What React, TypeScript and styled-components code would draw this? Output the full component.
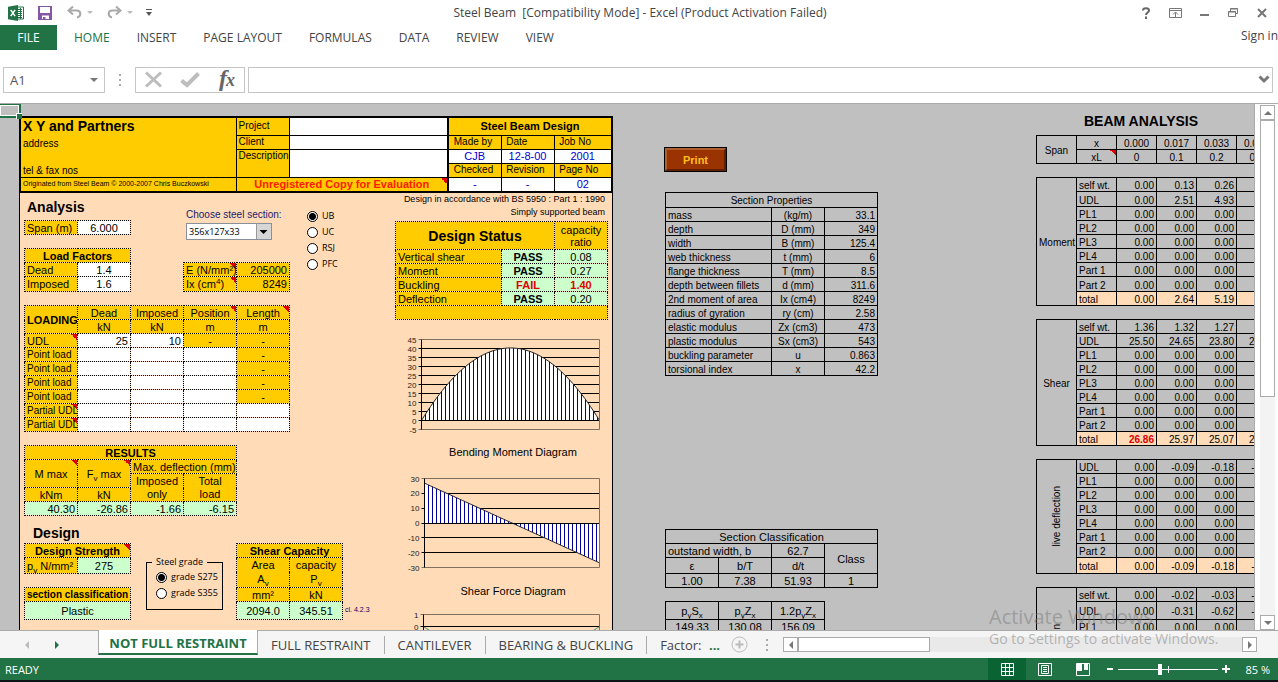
import React from 'react';
import styled, { createGlobalStyle, css } from 'styled-components';

const GREEN = '#217346';
const GOLD = '#ffcc00';
const PEACH = '#ffdbb8';
const MINT = '#ccffcc';
const GREY = '#c0c0c0';
const SHEET_FONT = '"Liberation Sans", Arial, sans-serif';
const UI_FONT = '"Open Sans", "Noto Sans", sans-serif';

const GlobalStyle = createGlobalStyle`
  *, *::before, *::after { box-sizing: border-box; }
  body { margin: 0; background: #fff; font-family: ${UI_FONT}; overflow: hidden; }
  button, input, select { font: inherit; color: inherit; margin: 0; padding: 0; border: 0; background: none; border-radius: 0; }
  h1, h2, h3, p, figure { margin: 0; }
`;

/* ---------- window frame ---------- */

const Shell = styled.div`
  position: relative;
  display: flex;
  flex-direction: column;
  height: 100vh;
  overflow: hidden;
`;

const TitleBar = styled.header`
  display: grid;
  grid-template-columns: 1fr auto 1fr;
  align-items: center;
  height: 25px;
  padding: 0 6px 0 8px;
`;

const Title = styled.h1`
  font-size: 12px;
  font-weight: 400;
  color: #444;
  white-space: pre;
`;

const QuickAccess = styled.div`
  display: flex;
  align-items: center;
  color: #b1b1b1;
`;

const WindowButtons = styled.div`
  display: flex;
  justify-content: flex-end;
  align-items: center;
  gap: 9px;
`;

const IconButton = styled.button<{ $w?: number; $gap?: number }>`
  display: flex;
  align-items: center;
  justify-content: center;
  width: ${p => p.$w ?? 20}px;
  height: 22px;
  margin-right: ${p => p.$gap ?? 0}px;
`;

const Ribbon = styled.nav`
  display: flex;
  align-items: stretch;
  height: 25px;
  font-size: 12px;
  color: #444;
`;

const RibbonTab = styled.button<{ $active?: boolean }>`
  padding: 0 14px 0 13px;
  color: ${p => (p.$active ? GREEN : '#444')};
`;

const FileTab = styled.button`
  width: 57px;
  margin-right: 4px;
  background: ${GREEN};
  color: #fff;
`;

const SignIn = styled.a`
  margin-left: auto;
  padding-top: 2px;
  color: #444;
  text-decoration: none;
`;

const FormulaBar = styled.div`
  display: flex;
  align-items: center;
  height: 54px;
  padding: 6px 5px 0 3px;
  border-bottom: 1px solid #ababab;
`;

const Framed = styled.div`
  display: flex;
  align-items: center;
  height: 26px;
  border: 1px solid #c6c6c6;
`;

const NameBox = styled(Framed)`
  width: 102px;
  input { flex: 1; min-width: 0; padding-left: 6px; font-size: 13px; color: #555; }
  button { display: flex; padding: 0 6px; }
`;

const FormulaTools = styled(Framed)`
  width: 110px;
  padding-left: 8px;
  justify-content: space-between;
  padding-right: 6px;
  button { display: flex; }
`;

const FormulaInput = styled(Framed)`
  flex: 1;
  margin-left: 3px;
  input { flex: 1; font-size: 13px; }
  button { display: flex; padding-right: 2px; }
`;

const GripDots = styled.span`
  display: flex;
  width: 30px;
  justify-content: center;
`;

/* ---------- worksheet ---------- */

const Workspace = styled.main`
  display: flex;
  flex: 1;
  min-height: 0;
`;

const Sheet = styled.div`
  position: relative;
  display: flex;
  flex: 1;
  align-items: flex-start;
  min-width: 0;
  overflow: hidden;
  padding: 12px 0 0 19px;
  background: ${GREY};
  border-right: 1px solid #ababab;
  font-family: ${SHEET_FONT};
  font-size: 11px;
  line-height: 12px;
  color: #000;
`;

const ActiveCell = styled.div`
  position: absolute;
  left: -2px;
  top: 0;
  width: 23px;
  height: 14px;
  border: 2px solid ${GREEN};
  border-top-width: 1px;
  box-shadow: inset 0 0 0 1px #fff;
  &::after {
    content: '';
    position: absolute;
    right: -3px;
    bottom: -3px;
    width: 6px;
    height: 6px;
    background: ${GREEN};
    border: solid #fff;
    border-width: 1px 0 0 1px;
  }
`;

const DesignPage = styled.section`
  flex: none;
  width: 594px;
`;

const DesignBody = styled.div`
  display: flex;
  padding-left: 4px;
  height: 600px;
  background: ${PEACH};
  border: solid #000;
  border-width: 0 1px;
`;

const LeftColumn = styled.div`
  width: 371px;
`;

const RightColumn = styled.div`
  width: 214px;
`;

const SideColumn = styled.section<{ $w: number; $left: number; $top: number }>`
  flex: none;
  width: ${p => p.$w}px;
  margin-left: ${p => p.$left}px;
  padding-top: ${p => p.$top}px;
`;

const Row = styled.div<{ $gap?: number }>`
  display: flex;
  align-items: flex-start;
  gap: ${p => p.$gap ?? 0}px;
`;

const Stack = styled.div<{ $w?: number; $pt?: number }>`
  display: flex;
  flex-direction: column;
  width: ${p => (p.$w ? `${p.$w}px` : 'auto')};
  padding-top: ${p => p.$pt ?? 0}px;
`;

const Grid = styled.table<{ $w: number; $dotted?: boolean; $mt?: number; $small?: boolean }>`
  flex: none;
  width: ${p => p.$w}px;
  margin-top: ${p => p.$mt ?? 0}px;
  border-collapse: collapse;
  table-layout: fixed;
  font-size: ${p => (p.$small ? 10 : 11)}px;
  line-height: ${p => (p.$small ? 11 : 12)}px;
  td, th { border: 1px ${p => (p.$dotted ? 'dotted' : 'solid')} #000; }
  tr > td, tr > th { padding-top: ${p => (p.$small ? 2 : 0)}px; }
`;

const Tr = styled.tr<{ $h?: number }>`
  height: ${p => p.$h ?? 14}px;
`;

type CellProps = {
  $bg?: string;
  $align?: 'left' | 'center' | 'right';
  $bold?: boolean;
  $note?: boolean;
  $size?: number;
  $color?: string;
  $open?: 'top' | 'bottom';
  $valign?: string;
  $thick?: boolean;
};

const cell = css<CellProps>`
  height: inherit;
  padding: 0 2px;
  overflow: hidden;
  white-space: nowrap;
  text-align: ${p => p.$align ?? 'left'};
  vertical-align: ${p => p.$valign ?? 'middle'};
  font-weight: ${p => (p.$bold ? 700 : 400)};
  color: ${p => p.$color ?? 'inherit'};
  ${p => p.$size && `font-size: ${p.$size}px;`}
  background-color: ${p => p.$bg ?? 'transparent'};
  ${p =>
    p.$note &&
    css`
      background-image: linear-gradient(to top right, transparent 50%, #e00000 50%);
      background-size: 6px 6px;
      background-position: top right;
      background-repeat: no-repeat;
    `}
  ${Grid} && { ${p => p.$open === 'top' && 'border-top-style: none;'} }
  ${Grid} && { ${p => p.$open === 'bottom' && 'border-bottom-style: none;'} }
  ${Grid} && { ${p => p.$thick && 'border-left: 2px solid #000;'} }
  sub { font-size: 8px; line-height: 0; vertical-align: -3px; }
  sup { font-size: 8px; line-height: 0; vertical-align: 4px; }
`;

const Td = styled.td<CellProps>`${cell}`;
const Th = styled.th<CellProps>`${cell}`;

const HeaderGrid = styled(Grid)`
  border: 2px solid #000;
`;

const Company = styled.div`
  display: flex;
  flex-direction: column;
  height: 58px;
  h2 { font-size: 14px; line-height: 17px; }
  p { font-size: 10px; line-height: 18px; }
  p:last-child { margin-top: auto; line-height: 10px; }
`;

const Vertical = styled.span`
  display: inline-block;
  writing-mode: vertical-rl;
  transform: rotate(180deg);
`;

const SectionTitle = styled.h2<{ $pt: number; $left: number }>`
  height: 27px;
  padding: ${p => p.$pt}px 0 0 ${p => p.$left}px;
  font-size: 14px;
  line-height: 19px;
`;

const ChooseLabel = styled.label`
  padding-left: 3px;
  font-size: 10px;
  line-height: 14px;
  color: #1a1a6e;
  white-space: nowrap;
`;

const SelectBox = styled.div`
  display: flex;
  position: relative;
  width: 86px;
  height: 17px;
  margin: 1px 0 22px 3px;
  background: #fff;
  border: 1px solid #8a8f99;
  select {
    flex: 1;
    appearance: none;
    padding-left: 2px;
    font-family: ${UI_FONT};
    font-size: 9px;
    line-height: 14px;
  }
  svg { position: absolute; right: 0; top: 0; pointer-events: none; }
`;

const RadioLabel = styled.label`
  display: flex;
  align-items: center;
  gap: 4px;
  height: 16px;
  font-family: ${UI_FONT};
  font-size: 9px;
  white-space: nowrap;
  input {
    appearance: none;
    width: 11px;
    height: 11px;
    border: 1px solid #000;
    border-radius: 50%;
    background: #fff;
  }
  input:checked { background: radial-gradient(circle, #000 0 3px, #fff 4px); }
`;

const GradeBox = styled.fieldset`
  width: 77px;
  height: 55px;
  margin: 12px 0 0;
  padding: 0 0 0 9px;
  border: 1px solid #000;
  font-family: ${UI_FONT};
  font-size: 9px;
  legend { padding: 0 4px; margin-left: -4px; height: 14px; line-height: 14px; }
`;

const ClauseNote = styled.span`
  margin: 62px 0 0 2px;
  font-size: 7px;
  line-height: 10px;
  color: #000066;
  white-space: nowrap;
`;

const RightNote = styled.p`
  display: flex;
  justify-content: flex-end;
  padding-right: 4px;
  font-size: 9px;
  line-height: 13px;
  white-space: nowrap;
  & + & { margin-bottom: 2px; }
`;

const Figure = styled.figure`
  svg { display: block; }
  figcaption {
    padding-left: 22px;
    height: 22px;
    line-height: 22px;
    font-size: 11px;
    text-align: center;
  }
`;

const PrintButton = styled.button`
  display: block;
  width: 63px;
  height: 25px;
  margin: 0 0 20px -1px;
  background: #993300;
  border: 3px solid;
  border-color: #b06030 #5e2000 #5e2000 #b06030;
  outline: 1px solid #000;
  outline-offset: -1px;
  color: #ffbf1f;
  font-size: 11px;
  font-weight: 700;
`;

const AnalysisTitle = styled.h2`
  height: 19px;
  padding-left: 48px;
  font-size: 14px;
  line-height: 10px;
  white-space: nowrap;
`;

/* ---------- scroll bars, sheet tabs, status ---------- */

const VerticalScroll = styled.div`
  display: flex;
  flex-direction: column;
  width: 23px;
  padding: 1px 3px 0 5px;
  background: #fff;
`;

const ScrollButton = styled.button`
  display: flex;
  flex: none;
  align-items: center;
  justify-content: center;
  width: 15px;
  height: 15px;
  background: #fff;
  border: 1px solid #ababab;
`;

const ScrollTrack = styled.div<{ $vertical?: boolean }>`
  display: flex;
  flex-direction: ${p => (p.$vertical ? 'column' : 'row')};
  flex: 1;
  background: ${p => (p.$vertical ? '#f3f3f3' : '#e9e9e9')};
`;

const Thumb = styled.div<{ $length: string }>`
  flex: 0 0 ${p => p.$length};
  background: #fff;
  border: 1px solid #ababab;
`;

const SheetTabs = styled.div`
  display: flex;
  flex: none;
  align-items: center;
  height: 28px;
  padding-right: 21px;
  background: #f5f5f5;
  border-top: 1px solid #ababab;
  font-size: 13px;
  color: #444;
`;

const TabNav = styled.div`
  display: flex;
  flex: none;
  gap: 26px;
  width: 98px;
  padding-left: 25px;
  button { display: flex; }
`;

const SheetTab = styled.button<{ $active?: boolean; $last?: boolean }>`
  height: 18px;
  flex: none;
  padding: 0 ${p => (p.$last ? 6 : 13)}px 0 13px;
  line-height: 14px;
  border-right: ${p => (p.$last ? 0 : '1px solid #ababab')};
  white-space: nowrap;
  ${p =>
    p.$active &&
    css`
      align-self: flex-start;
      width: 160px;
      height: 25px;
      padding: 2px 0 0;
      margin-top: -1px;
      background: #fff;
      color: ${GREEN};
      font-weight: 700;
      border: solid #ababab;
      border-width: 0 1px;
      border-bottom: 2px solid ${GREEN};
    `}
`;

const MoreTabs = styled.button`
  width: 14px;
  color: ${GREEN};
  font-weight: 700;
`;

const HorizontalScroll = styled.div`
  display: flex;
  flex: 0 0 474px;
  margin-left: auto;
  height: 15px;
`;

const StatusBar = styled.footer`
  display: flex;
  flex: none;
  align-items: center;
  height: 24px;
  padding: 0 8px 0 5px;
  background: ${GREEN};
  border-bottom: 2px solid #0c1418;
  color: #fff;
  font-size: 11px;
`;

const ViewButton = styled.button<{ $active?: boolean }>`
  display: flex;
  align-items: center;
  justify-content: center;
  width: 38px;
  height: 22px;
  background: ${p => (p.$active ? '#0a6332' : 'transparent')};
`;

const ViewGroup = styled.div`
  display: flex;
  align-items: center;
  margin-left: auto;
`;

const ZoomGroup = styled.div`
  display: flex;
  align-items: center;
  gap: 4px;
  margin-left: 4px;
  button { display: flex; }
`;

const ZoomSlider = styled.input`
  appearance: none;
  width: 100px;
  height: 12px;
  background:
    linear-gradient(#fff, #fff) 50px 50% / 1px 7px no-repeat,
    linear-gradient(#fff, #fff) 0 50% / 100% 1px no-repeat;
  &::-webkit-slider-thumb { appearance: none; width: 4px; height: 11px; background: #fff; }
`;

const ZoomValue = styled.output`
  width: 36px;
  text-align: right;
`;

const Watermark = styled.div`
  position: absolute;
  right: 51px;
  bottom: 33px;
  width: 238px;
  color: rgba(120, 120, 120, 0.5);
  white-space: nowrap;
  pointer-events: none;
  p { font-size: 14px; line-height: 20px; }
  p:first-child { font-size: 20px; line-height: 24px; }
`;

/* ---------- drawing helpers ---------- */

const Triangle = ({ dir, size = 4, color = '#777' }: { dir: 'up' | 'down' | 'left' | 'right'; size?: number; color?: string }) => {
  const s = size;
  const paths = {
    up: `M0 ${s}L${s} 0L${2 * s} ${s}Z`,
    down: `M0 0L${s} ${s}L${2 * s} 0Z`,
    left: `M${s} 0L0 ${s}L${s} ${2 * s}Z`,
    right: `M0 0L${s} ${s}L0 ${2 * s}Z`,
  };
  const flat = dir === 'up' || dir === 'down';
  return (
    <svg width={flat ? 2 * s : s} height={flat ? s : 2 * s} fill={color}>
      <path d={paths[dir]} />
    </svg>
  );
};

const Dots = () => (
  <svg width="4" height="12" fill="#aaa">
    <path d="M1 0h2v2H1zM1 5h2v2H1zM1 10h2v2H1z" />
  </svg>
);

const ExcelLogo = () => (
  <svg width="16" height="16" viewBox="0 0 16 16">
    <path d="M9 2h6.500v12H9z" fill="#fff" stroke={GREEN} />
    <path d="M10 4.500h4M10 6.500h4M10 8.500h4M10 10.500h4M10 12.500h4M12.500 3v11" stroke={GREEN} />
    <path d="M0 1.800L10 0v16L0 14.200z" fill={GREEN} />
    <path d="M2.700 4.800l4.400 6.400M7.100 4.800l-4.400 6.400" stroke="#fff" strokeWidth="1.500" />
  </svg>
);

const SaveIcon = () => (
  <svg width="14" height="14" fill="none">
    <path d="M0 0h14v14H0z" fill="#8657a6" />
    <path d="M2 1h10v6H2zM4 9.500h7V13H4z" fill="#fff" />
    <path d="M5 11h2.500v2.500H5z" fill="#8657a6" />
  </svg>
);

const UndoIcon = ({ flip }: { flip?: boolean }) => (
  <svg width="15" height="13" viewBox="0 0 15 13" fill="none" stroke="#a9a9a9" strokeWidth="2">
    <g transform={flip ? 'translate(15 0) scale(-1 1)' : undefined}>
      <path d="M6 0.500L1.500 4.500L6 8.500M2 4.500H9.500C14.500 4.500 14.500 10.500 10 11.500" />
    </g>
  </svg>
);

/* ---------- charts ---------- */

const INK = '#0000a0';

type ChartProps = {
  height: number;
  left: number;
  top: number;
  bottom: number;
  max: number;
  min: number;
  step: number;
  value: (t: number) => number;
  line?: string;
  striped?: boolean;
};

const RIGHT = 204.5;

const Chart = ({ height, left, top, bottom, max, min, step, value, line = '#222', striped = true }: ChartProps) => {
  const y = (v: number) => top + ((max - v) * (bottom - top)) / (max - min);
  const ticks: number[] = [];
  for (let v = max; v >= min; v -= step) ticks.push(v);
  const span = RIGHT - left;
  const points: string[] = [];
  for (let i = 0; i <= 60; i++) points.push(`${left + (span * i) / 60},${y(value(i / 60))}`);
  const bars: number[] = [];
  for (let x = left + 4; x < RIGHT; x += 4) bars.push(x);
  return (
    <svg width="214" height={height} fontFamily={SHEET_FONT} fontSize="8" fill="#222">
      {ticks.map(v => (
        <g key={v}>
          <path
            d={`M${left - 3} ${Math.floor(y(v)) + 0.5}H${RIGHT}`}
            stroke={v === max || v === min ? '#80705f' : '#000'}
          />
          <text x={left - 5} y={y(v) + 3} textAnchor="end">{v}</text>
        </g>
      ))}
      {striped && (
        <polygon points={`${left},${y(0)} ${points.join(' ')} ${RIGHT},${y(0)}`} fill="#fff" />
      )}
      {striped &&
        bars.map(x => (
          <path key={x} d={`M${x} ${y(0)}V${y(value((x - left) / span))}`} stroke={INK} />
        ))}
      <polyline points={points.join(' ')} fill="none" stroke={line} />
      <path d={`M${left} ${Math.floor(y(0)) + 0.5}H${RIGHT}M${left} ${top}V${bottom}`} stroke="#000" />
      <path d={`M${RIGHT} ${top}V${bottom}`} stroke="#80705f" />
    </svg>
  );
};

/* ---------- tables ---------- */

const Cols = ({ widths }: { widths: number[] }) => (
  <colgroup>{widths.map((w, i) => <col key={i} width={w} />)}</colgroup>
);

const HeaderTable = () => (
  <HeaderGrid $w={594}>
    <Cols widths={[216, 53, 159, 53, 53, 58]} />
    <tbody>
      <Tr $h={18}>
        <Td rowSpan={4} $bg={GOLD} $valign="top">
          <Company>
            <h2>X Y and Partners</h2>
            <p>address</p>
            <p>tel &amp; fax nos</p>
          </Company>
        </Td>
        <Td $bg={GOLD} $size={10}>Project</Td>
        <Td $bg="#fff" />
        <Th colSpan={3} $bg={GOLD} $bold $align="center" $thick>Steel Beam Design</Th>
      </Tr>
      <Tr>
        <Td $bg={GOLD} $size={10}>Client</Td>
        <Td $bg="#fff" />
        <Td $bg={GOLD} $size={10} $thick>&nbsp;Made by</Td>
        <Td $bg={GOLD} $size={10}>&nbsp;Date</Td>
        <Td $bg={GOLD} $size={10}>&nbsp;Job No</Td>
      </Tr>
      <Tr>
        <Td rowSpan={2} $bg={GOLD} $size={10} $valign="top">Description</Td>
        <Td rowSpan={2} $bg="#fff" />
        <Td $bg="#fff" $align="center" $color="#0000d0" $thick>CJB</Td>
        <Td $bg="#fff" $align="center" $color="#0000d0">12-8-00</Td>
        <Td $bg="#fff" $align="center" $color="#0000d0">2001</Td>
      </Tr>
      <Tr>
        <Td $bg={GOLD} $size={10} $thick>&nbsp;Checked</Td>
        <Td $bg={GOLD} $size={10}>&nbsp;Revision</Td>
        <Td $bg={GOLD} $size={10}>&nbsp;Page No</Td>
      </Tr>
      <Tr $h={15}>
        <Td $bg={GOLD} $size={7}>Originated from Steel Beam © 2000-2007 Chris Buczkowski</Td>
        <Td colSpan={2} $bg={GOLD} $bold $align="center" $color="#ff1a00" $note>Unregistered Copy for Evaluation</Td>
        <Td $bg="#fff" $align="center" $color="#0000d0" $thick>-</Td>
        <Td $bg="#fff" $align="center" $color="#0000d0">-</Td>
        <Td $bg="#fff" $align="center" $color="#0000d0">02</Td>
      </Tr>
    </tbody>
  </HeaderGrid>
);

const LOADING_ROWS = [
  { name: 'UDL', note: true, cells: ['25', '10', '-', '-'] },
  { name: 'Point load', cells: ['', '', '', '-'] },
  { name: 'Point load', cells: ['', '', '', '-'] },
  { name: 'Point load', cells: ['', '', '', '-'] },
  { name: 'Point load', cells: ['', '', '', '-'] },
  { name: 'Partial UDL', note: true, cells: ['', '', '', ''] },
  { name: 'Partial UDL', note: true, cells: ['', '', '', ''] },
];

const LoadingTable = () => (
  <Grid $w={266} $dotted $mt={13}>
    <Cols widths={[53, 53, 53, 53, 53]} />
    <tbody>
      <Tr>
        <Th rowSpan={2} $bg={GOLD} $bold $align="center">LOADING</Th>
        <Th $bg={GOLD} $align="center">Dead</Th>
        <Th $bg={GOLD} $align="center">Imposed</Th>
        <Th $bg={GOLD} $align="center" $note>Position</Th>
        <Th $bg={GOLD} $align="center" $note>Length</Th>
      </Tr>
      <Tr>
        {['kN', 'kN', 'm', 'm'].map((u, i) => <Td key={i} $bg={GOLD} $align="center">{u}</Td>)}
      </Tr>
      {LOADING_ROWS.map((r, i) => (
        <Tr key={i}>
          <Td $bg={GOLD} $size={i ? 10 : 11} $note={r.note}>{r.name}</Td>
          {r.cells.map((c, k) => (
            <Td key={k} $bg={c === '-' ? GOLD : '#fff'} $align={c === '-' ? 'center' : 'right'}>{c}</Td>
          ))}
        </Tr>
      ))}
    </tbody>
  </Grid>
);

const ResultsTable = () => (
  <Grid $w={213} $dotted $mt={13}>
    <Cols widths={[53, 53, 53, 53]} />
    <tbody>
      <Tr><Th colSpan={4} $bg={GOLD} $bold $align="center">RESULTS</Th></Tr>
      <Tr>
        <Td rowSpan={2} $bg={GOLD} $align="center" $note>M max</Td>
        <Td rowSpan={2} $bg={GOLD} $align="center" $note>F<sub>v</sub> max</Td>
        <Td colSpan={2} $bg={GOLD} $align="center">Max. deflection (mm)</Td>
      </Tr>
      <Tr>
        <Td $bg={GOLD} $align="center" $open="bottom">Imposed</Td>
        <Td $bg={GOLD} $align="center" $open="bottom">Total</Td>
      </Tr>
      <Tr>
        <Td $bg={GOLD} $align="center">kNm</Td>
        <Td $bg={GOLD} $align="center">kN</Td>
        <Td $bg={GOLD} $align="center" $open="top">only</Td>
        <Td $bg={GOLD} $align="center" $open="top">load</Td>
      </Tr>
      <Tr>
        {['40.30', '-26.86', '-1.66', '-6.15'].map(v => <Td key={v} $bg={MINT} $align="right">{v}</Td>)}
      </Tr>
    </tbody>
  </Grid>
);

const STATUS_ROWS = [
  ['Vertical shear', 'PASS', '0.08'],
  ['Moment', 'PASS', '0.27'],
  ['Buckling', 'FAIL', '1.40'],
  ['Deflection', 'PASS', '0.20'],
];

const StatusTable = () => (
  <Grid $w={213} $dotted>
    <Cols widths={[106, 53, 53]} />
    <tbody>
      <Tr $h={28}>
        <Th colSpan={2} $bg={GOLD} $bold $align="center" $size={14}>Design Status</Th>
        <Th $bg={GOLD} $align="center">capacity<br />ratio</Th>
      </Tr>
      {STATUS_ROWS.map(([name, state, ratio]) => {
        const fail = state === 'FAIL';
        return (
          <Tr key={name}>
            <Td $bg={GOLD}>{name}</Td>
            <Td $bg={MINT} $bold $align="center" $color={fail ? '#e00000' : '#000'}>{state}</Td>
            <Td $bg={MINT} $bold={fail} $align="center" $color={fail ? '#e00000' : '#000'}>{ratio}</Td>
          </Tr>
        );
      })}
      <Tr><Td colSpan={3} $bg={GOLD} /></Tr>
    </tbody>
  </Grid>
);

const PROPERTY_ROWS = [
  ['mass', '(kg/m)', '33.1'],
  ['depth', 'D (mm)', '349'],
  ['width', 'B (mm)', '125.4'],
  ['web thickness', 't (mm)', '6'],
  ['flange thickness', 'T (mm)', '8.5'],
  ['depth between fillets', 'd (mm)', '311.6'],
  ['2nd moment of area', 'Ix (cm4)', '8249'],
  ['radius of gyration', 'ry (cm)', '2.58'],
  ['elastic modulus', 'Zx (cm3)', '473'],
  ['plastic modulus', 'Sx (cm3)', '543'],
  ['buckling parameter', 'u', '0.863'],
  ['torsional index', 'x', '42.2'],
];

const PropertiesTable = () => (
  <Grid $w={213} $small>
    <Cols widths={[106, 53, 53]} />
    <tbody>
      <Tr $h={15}><Th colSpan={3} $align="center" $valign="top">Section Properties</Th></Tr>
      {PROPERTY_ROWS.map(([name, unit, v]) => (
        <Tr key={name}>
          <Td>{name}</Td>
          <Td $align="center">{unit}</Td>
          <Td $align="right">{v}</Td>
        </Tr>
      ))}
    </tbody>
  </Grid>
);

const ClassificationTable = () => (
  <Grid $w={213} $mt={153}>
    <Cols widths={[53, 53, 53, 53]} />
    <tbody>
      <Tr><Th colSpan={4} $align="center">Section Classification</Th></Tr>
      <Tr>
        <Td colSpan={2}>outstand width, b</Td>
        <Td $align="center">62.7</Td>
        <Td rowSpan={2} $align="center">Class</Td>
      </Tr>
      <Tr $h={16}>
        <Td $align="center">ε</Td>
        <Td $align="center">b/T</Td>
        <Td $align="center">d/t</Td>
      </Tr>
      <Tr>
        {['1.00', '7.38', '51.93', '1'].map(v => <Td key={v} $align="center">{v}</Td>)}
      </Tr>
    </tbody>
  </Grid>
);

const CapacityTable = () => (
  <Grid $w={160} $mt={13}>
    <Cols widths={[53, 53, 53]} />
    <tbody>
      <Tr $h={18}>
        <Td $align="center">p<sub>y</sub>S<sub>x</sub></Td>
        <Td $align="center">p<sub>y</sub>Z<sub>x</sub></Td>
        <Td $align="center">1.2p<sub>y</sub>Z<sub>x</sub></Td>
      </Tr>
      <Tr>
        {['149.33', '130.08', '156.09'].map(v => <Td key={v} $align="center">{v}</Td>)}
      </Tr>
    </tbody>
  </Grid>
);

type BlockRow = { name: string; values: string[]; h?: number; hot?: boolean };

const zero = (name: string): BlockRow => ({ name, values: ['0.00', '0.00', '0.00', '0.00'] });
const POINTS = ['PL1', 'PL2', 'PL3', 'PL4', 'Part 1', 'Part 2'].map(zero);

const MOMENT: BlockRow[] = [
  { name: 'self wt.', values: ['0.00', '0.13', '0.26', '0.38'] },
  { name: 'UDL', values: ['0.00', '2.51', '4.93', '7.27'], h: 15 },
  ...POINTS.slice(0, 5),
  { ...POINTS[5], h: 15 },
  { name: 'total', values: ['0.00', '2.64', '5.19', '7.65'] },
];

const SHEAR: BlockRow[] = [
  { name: 'self wt.', values: ['1.36', '1.32', '1.27', '1.23'] },
  { name: 'UDL', values: ['25.50', '24.65', '23.80', '22.95'] },
  ...POINTS,
  { name: 'total', values: ['26.86', '25.97', '25.07', '24.18'], hot: true },
];

const LIVE: BlockRow[] = [
  { name: 'UDL', values: ['0.00', '-0.09', '-0.18', '-0.26'] },
  ...POINTS,
  { name: 'total', values: ['0.00', '-0.09', '-0.18', '-0.26'], h: 16 },
];

const TOTAL: BlockRow[] = [
  { name: 'self wt.', values: ['0.00', '-0.02', '-0.03', '-0.05'] },
  { name: 'UDL', values: ['0.00', '-0.31', '-0.62', '-0.92'], h: 18 },
  ...POINTS,
];

const AnalysisBlock = ({ label, rows, vertical }: { label: string; rows: BlockRow[]; vertical?: boolean }) => (
  <Grid $w={241} $mt={13} $small>
    <Cols widths={[40, 40, 40, 40, 40, 40]} />
    <tbody>
      {rows.map((r, i) => {
        const total = r.name === 'total';
        const bg = total ? PEACH : undefined;
        return (
          <Tr key={r.name} $h={r.h}>
            {i === 0 && (
              <Th rowSpan={rows.length} $align="center">{vertical ? <Vertical>{label}</Vertical> : label}</Th>
            )}
            <Td $bg={bg}>{r.name}</Td>
            {r.values.map((v, k) => {
              const hot = r.hot && k === 0;
              return (
                <Td key={k} $bg={bg} $align="right" $bold={hot} $color={hot ? '#e00000' : undefined}>{v}</Td>
              );
            })}
          </Tr>
        );
      })}
    </tbody>
  </Grid>
);

const SpanTable = () => (
  <Grid $w={241} $small>
    <Cols widths={[40, 40, 40, 40, 40, 40]} />
    <tbody>
      <Tr>
        <Th rowSpan={2} $align="center">Span</Th>
        <Td $align="center">x</Td>
        {['0.000', '0.017', '0.033', '0.050'].map(v => <Td key={v} $align="center">{v}</Td>)}
      </Tr>
      <Tr>
        <Td $align="center" $note>xL</Td>
        {['0', '0.1', '0.2', '0.3'].map(v => <Td key={v} $align="center">{v}</Td>)}
      </Tr>
    </tbody>
  </Grid>
);

/* ---------- page ---------- */

export default function App() {
  return (
    <Shell>
      <GlobalStyle />
      <TitleBar>
        <QuickAccess>
          <IconButton $w={16} $gap={14} aria-label="Excel"><ExcelLogo /></IconButton>
          <IconButton $w={14} $gap={15} aria-label="Save"><SaveIcon /></IconButton>
          <IconButton $w={15} $gap={5} aria-label="Undo"><UndoIcon /></IconButton>
          <IconButton $w={6} $gap={14} aria-label="Undo list"><Triangle dir="down" size={3} color="#bbb" /></IconButton>
          <IconButton $w={15} $gap={5} aria-label="Redo"><UndoIcon flip /></IconButton>
          <IconButton $w={6} $gap={13} aria-label="Redo list"><Triangle dir="down" size={3} color="#bbb" /></IconButton>
          <IconButton $w={6} aria-label="Customize toolbar">
            <svg width="6" height="7" fill="#555"><path d="M0 0h6v1H0zM0 3h6L3 7z" /></svg>
          </IconButton>
        </QuickAccess>
        <Title>{'Steel Beam  [Compatibility Mode] - Excel (Product Activation Failed)'}</Title>
        <WindowButtons>
          <IconButton aria-label="Help">
            <svg width="8" height="12" fill="none" stroke="#666" strokeWidth="2"><path d="M1 3.500C1 0.500 7 0.500 7 3.500C7 5.500 4 5.500 4 8M4 9.500V12" /></svg>
          </IconButton>
          <IconButton aria-label="Ribbon display">
            <svg width="13" height="10" fill="none" stroke="#777"><path d="M0.500 0.500h12v9H0.500zM0.500 2.500h12M6.500 9V4.500M4 6.500l2.500-2.500L9 6.500" /></svg>
          </IconButton>
          <IconButton aria-label="Minimize">
            <svg width="9" height="6" fill="#777"><path d="M0 4h9v2H0z" /></svg>
          </IconButton>
          <IconButton aria-label="Restore">
            <svg width="10" height="9" fill="none" stroke="#777"><path d="M0.500 3.500h7v5H0.500zM2.500 3V0.500h7v5H8M0 4h8M2 1h8" /></svg>
          </IconButton>
          <IconButton aria-label="Close">
            <svg width="10" height="10" fill="none" stroke="#777" strokeWidth="2"><path d="M1 1l8 8M9 1L1 9" /></svg>
          </IconButton>
        </WindowButtons>
      </TitleBar>

      <Ribbon>
        <FileTab>FILE</FileTab>
        <RibbonTab $active>HOME</RibbonTab>
        {['INSERT', 'PAGE LAYOUT', 'FORMULAS', 'DATA', 'REVIEW', 'VIEW'].map(t => <RibbonTab key={t}>{t}</RibbonTab>)}
        <SignIn href="#signin">Sign in</SignIn>
      </Ribbon>

      <FormulaBar>
        <NameBox>
          <input aria-label="Name box" defaultValue="A1" />
          <button aria-label="Names"><Triangle dir="down" /></button>
        </NameBox>
        <GripDots><Dots /></GripDots>
        <FormulaTools>
          <button aria-label="Cancel">
            <svg width="19" height="17" fill="none" stroke="#bdbdbd" strokeWidth="3"><path d="M2 1.500L17 15.500M17 1.500L2 15.500" /></svg>
          </button>
          <button aria-label="Enter">
            <svg width="20" height="16" fill="none" stroke="#bdbdbd" strokeWidth="4"><path d="M1.500 8.500L7 13L18.500 1.500" /></svg>
          </button>
          <button aria-label="Insert function">
            <svg width="22" height="24" fill="#666" fontFamily='"Liberation Serif", serif' fontStyle="italic" fontWeight="700">
              <text x="3" y="18" fontSize="24">f</text>
              <text x="10" y="18" fontSize="18">x</text>
            </svg>
          </button>
        </FormulaTools>
        <FormulaInput>
          <input aria-label="Formula" />
          <button aria-label="Expand formula bar">
            <svg width="12" height="9" fill="none" stroke="#777" strokeWidth="3"><path d="M1.500 1.500L6 6L10.500 1.500" /></svg>
          </button>
        </FormulaInput>
      </FormulaBar>

      <Workspace>
        <Sheet>
          <ActiveCell />
          <DesignPage>
            <HeaderTable />
            <DesignBody>
              <LeftColumn>
                <Row $gap={17}>
                  <Stack $w={142}>
                    <SectionTitle $pt={5} $left={3}>Analysis</SectionTitle>
                    <Grid $w={107} $dotted>
                      <Cols widths={[53, 53]} />
                      <tbody><Tr><Td $bg={GOLD}>Span (m)</Td><Td $bg="#fff" $align="center">6.000</Td></Tr></tbody>
                    </Grid>
                    <Grid $w={107} $dotted $mt={13}>
                      <Cols widths={[53, 53]} />
                      <tbody>
                        <Tr><Th colSpan={2} $bg={GOLD} $bold $align="center">Load Factors</Th></Tr>
                        <Tr><Td $bg={GOLD}>Dead</Td><Td $bg="#fff" $align="center">1.4</Td></Tr>
                        <Tr $h={15}><Td $bg={GOLD}>Imposed</Td><Td $bg="#fff" $align="center">1.6</Td></Tr>
                      </tbody>
                    </Grid>
                  </Stack>
                  <Stack $w={107} $pt={15}>
                    <ChooseLabel htmlFor="section">Choose steel section:</ChooseLabel>
                    <SelectBox>
                      <select id="section"><option>356x127x33</option></select>
                      <svg width="15" height="15"><path d="M0 0h15v15H0z" fill="#d6d6d6" /><path d="M3.500 6h8l-4 4z" /><path d="M0.500 0v15" stroke="#999" /></svg>
                    </SelectBox>
                    <Grid $w={107} $dotted>
                      <Cols widths={[53, 53]} />
                      <tbody>
                        <Tr><Td $bg={GOLD} $note>E (N/mm²)</Td><Td $bg={GOLD} $align="right">205000</Td></Tr>
                        <Tr $h={15}><Td $bg={GOLD} $note>Ix (cm<sup>4</sup>)</Td><Td $bg={GOLD} $align="right">8249</Td></Tr>
                      </tbody>
                    </Grid>
                  </Stack>
                  <Stack $pt={15}>
                    {['UB', 'UC', 'RSJ', 'PFC'].map((t, i) => (
                      <RadioLabel key={t}><input type="radio" name="shape" defaultChecked={i === 0} />{t}</RadioLabel>
                    ))}
                  </Stack>
                </Row>
                <LoadingTable />
                <ResultsTable />
                <SectionTitle $pt={8} $left={9}>Design</SectionTitle>
                <Row>
                  <Stack $w={122}>
                    <Grid $w={107} $dotted>
                      <Cols widths={[53, 53]} />
                      <tbody>
                        <Tr><Th colSpan={2} $bg={GOLD} $bold $align="center" $note>Design Strength</Th></Tr>
                        <Tr $h={16}><Td $bg={GOLD}>p<sub>y</sub> N/mm²</Td><Td $bg={MINT} $align="center">275</Td></Tr>
                      </tbody>
                    </Grid>
                    <Grid $w={107} $dotted $mt={13}>
                      <tbody>
                        <Tr><Th $bg={GOLD} $bold $align="center" $size={10}>section classification</Th></Tr>
                        <Tr $h={18}><Td $bg={MINT} $align="center">Plastic</Td></Tr>
                      </tbody>
                    </Grid>
                  </Stack>
                  <Stack $w={90}>
                    <GradeBox>
                      <legend>Steel grade</legend>
                      <RadioLabel><input type="radio" name="grade" defaultChecked />grade S275</RadioLabel>
                      <RadioLabel><input type="radio" name="grade" />grade S355</RadioLabel>
                    </GradeBox>
                  </Stack>
                  <Grid $w={107} $dotted>
                    <Cols widths={[53, 53]} />
                    <tbody>
                      <Tr><Th colSpan={2} $bg={GOLD} $bold $align="center">Shear Capacity</Th></Tr>
                      <Tr>
                        <Td $bg={GOLD} $align="center" $open="bottom">Area</Td>
                        <Td $bg={GOLD} $align="center" $open="bottom">capacity</Td>
                      </Tr>
                      <Tr $h={16}>
                        <Td $bg={GOLD} $align="center" $open="top">A<sub>v</sub></Td>
                        <Td $bg={GOLD} $align="center" $open="top">P<sub>v</sub></Td>
                      </Tr>
                      <Tr><Td $bg={GOLD} $align="center">mm²</Td><Td $bg={GOLD} $align="center">kN</Td></Tr>
                      <Tr $h={18}><Td $bg={MINT} $align="center">2094.0</Td><Td $bg={MINT} $align="center">345.51</Td></Tr>
                    </tbody>
                  </Grid>
                  <ClauseNote>cl. 4.2.3</ClauseNote>
                </Row>
              </LeftColumn>
              <RightColumn>
                <RightNote>Design in accordance with BS 5950 : Part 1 : 1990</RightNote>
                <RightNote>Simply supported beam</RightNote>
                <StatusTable />
                <Figure>
                  <Chart height={121} left={26.5} top={19.5} bottom={109.5} max={45} min={-5} step={5} value={t => 161.2 * t * (1 - t)} />
                  <figcaption>Bending Moment Diagram</figcaption>
                </Figure>
                <Figure>
                  <Chart height={117} left={29.5} top={15.5} bottom={104.5} max={30} min={-30} step={10} value={t => 26.86 - 53.72 * t} />
                  <figcaption>Shear Force Diagram</figcaption>
                </Figure>
                <Figure>
                  <Chart height={40} left={28.5} top={12.5} bottom={60.5} max={1} min={-3} step={1} value={t => -10 * t * (1 - t)} line="#2f8f8f" striped={false} />
                </Figure>
              </RightColumn>
            </DesignBody>
          </DesignPage>

          <SideColumn $w={213} $left={52} $top={31}>
            <PrintButton>Print</PrintButton>
            <PropertiesTable />
            <ClassificationTable />
            <CapacityTable />
          </SideColumn>

          <SideColumn $w={241} $left={158} $top={0}>
            <AnalysisTitle>BEAM ANALYSIS</AnalysisTitle>
            <SpanTable />
            <AnalysisBlock label="Moment" rows={MOMENT} />
            <AnalysisBlock label="Shear" rows={SHEAR} />
            <AnalysisBlock label="live deflection" rows={LIVE} vertical />
            <AnalysisBlock label="deflection" rows={TOTAL} vertical />
          </SideColumn>
        </Sheet>
        <VerticalScroll>
          <ScrollButton aria-label="Scroll up"><Triangle dir="up" /></ScrollButton>
          <ScrollTrack $vertical><Thumb $length="56%" /></ScrollTrack>
          <ScrollButton aria-label="Scroll down"><Triangle dir="down" /></ScrollButton>
        </VerticalScroll>
      </Workspace>

      <SheetTabs>
        <TabNav>
          <button aria-label="Previous sheet"><Triangle dir="left" color="#bbb" /></button>
          <button aria-label="Next sheet"><Triangle dir="right" color={GREEN} /></button>
        </TabNav>
        <SheetTab $active>NOT FULL RESTRAINT</SheetTab>
        <SheetTab>FULL RESTRAINT</SheetTab>
        <SheetTab>CANTILEVER</SheetTab>
        <SheetTab>BEARING &amp; BUCKLING</SheetTab>
        <SheetTab $last>Factor:</SheetTab>
        <MoreTabs aria-label="More sheets">...</MoreTabs>
        <IconButton $w={36} $gap={8} aria-label="New sheet">
          <svg width="17" height="17" fill="none" stroke="#bbb"><circle cx="8.500" cy="8.500" r="7.500" /><path d="M4.500 8.500h8M8.500 4.500v8" strokeWidth="2" /></svg>
        </IconButton>
        <Dots />
        <HorizontalScroll>
          <ScrollButton aria-label="Scroll left"><Triangle dir="left" /></ScrollButton>
          <ScrollTrack><Thumb $length="132px" /></ScrollTrack>
          <ScrollButton aria-label="Scroll right"><Triangle dir="right" /></ScrollButton>
        </HorizontalScroll>
      </SheetTabs>

      <StatusBar>
        READY
        <ViewGroup>
          <ViewButton $active aria-label="Normal view">
            <svg width="13" height="13" fill="none" stroke="#fff"><path d="M0.500 0.500h12v12H0.500zM4.500 0v13M8.500 0v13M0 4.500h13M0 8.500h13" /></svg>
          </ViewButton>
          <ViewButton aria-label="Page layout view">
            <svg width="14" height="13" fill="none" stroke="#fff"><path d="M0.500 0.500h13v12H0.500zM3.500 2.500h7v8h-7zM5 4.500h4M5 6.500h4M5 8.500h4" /></svg>
          </ViewButton>
          <ViewButton aria-label="Page break view">
            <svg width="14" height="13" fill="none" stroke="#fff"><path d="M0.500 0.500h13v12H0.500z" /><path d="M1 1h5v7H1zM8 1h4v6H8z" fill="#fff" stroke="none" /></svg>
          </ViewButton>
          <ZoomGroup>
            <button aria-label="Zoom out"><svg width="8" height="8" fill="#fff"><path d="M1 3h6v2H1z" /></svg></button>
            <ZoomSlider type="range" aria-label="Zoom" min={0} max={100} defaultValue={42} />
            <button aria-label="Zoom in"><svg width="8" height="8" fill="#fff"><path d="M0 3h8v2H0zM3 0h2v8H3z" /></svg></button>
            <ZoomValue>85 %</ZoomValue>
          </ZoomGroup>
        </ViewGroup>
      </StatusBar>

      <Watermark>
        <p>Activate Windows</p>
        <p>Go to Settings to activate Windows.</p>
      </Watermark>
    </Shell>
  );
}
